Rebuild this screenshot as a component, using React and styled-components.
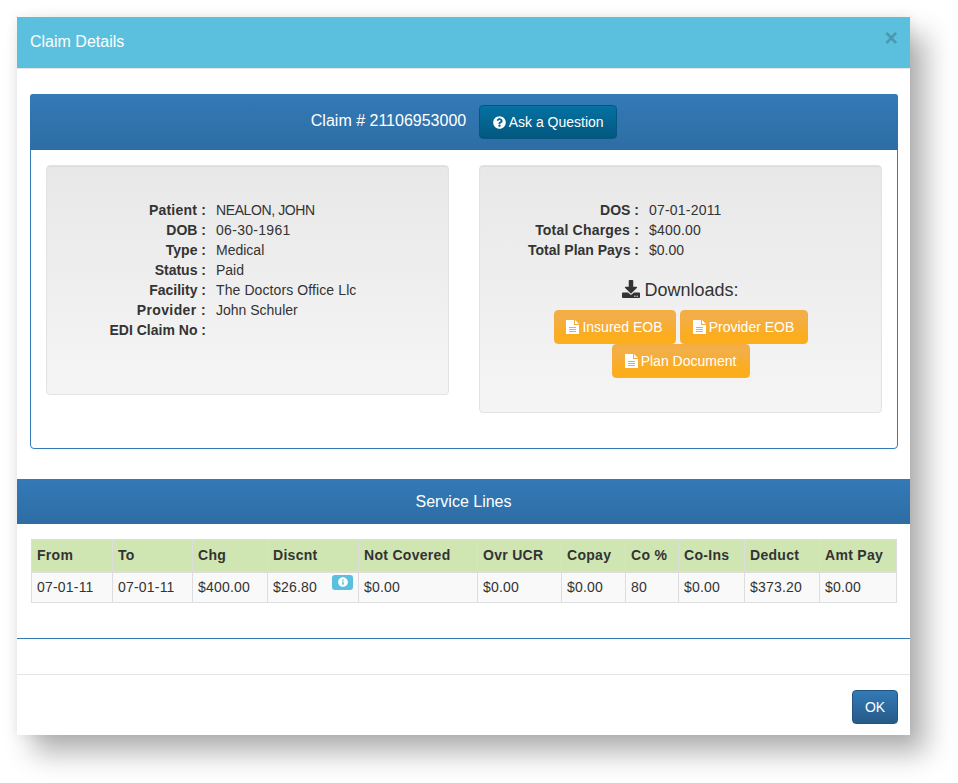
import React from "react";
import styled, { createGlobalStyle } from "styled-components";
import { FaQuestionCircle, FaDownload, FaInfoCircle } from "react-icons/fa";

const Global = createGlobalStyle`
  html, body { margin: 0; padding: 0; background: #fff; }
  body { font-family: "Liberation Sans", Arial, sans-serif; font-size: 14px; line-height: 20px; color: #333; }
  * { box-sizing: border-box; }
`;

const Page = styled.div`
  width: 958px;
  height: 783px;
  padding: 17px 48px 0 17px;
  overflow: hidden;
`;
const Modal = styled.div`
  width: 893px;
  height: 718px;
  background: #fff;
  display: flex;
  flex-direction: column;
  box-shadow: 16px 18px 26px rgba(0, 0, 0, 0.3), 0 0 12px rgba(0, 0, 0, 0.08);
`;
const ModalHeader = styled.div`
  height: 52px;
  flex: none;
  background: #5bc0de;
  border-bottom: 1px solid #e5e5e5;
  display: flex;
  align-items: flex-start;
  justify-content: space-between;
  padding: 15px 12px 0 13px;
`;
const Title = styled.div`
  color: #fff;
  font-size: 16px;
  line-height: 20px;
`;
const Close = styled.span`
  color: #000;
  opacity: 0.2;
  font-size: 23px;
  font-weight: 700;
  line-height: 14px;
  margin-top: -1px;
`;
const ClaimPanel = styled.section`
  margin: 25px 12px 30px 13px;
  height: 355px;
  border: 1px solid #337ab7;
  border-radius: 4px;
  flex: none;
`;
const BlueGradient = `
  background: linear-gradient(to bottom, #337ab7 0%, #2e6da4 100%);
  color: #fff;
  font-size: 16px;
`;
const PanelHeading = styled.div`
  ${BlueGradient}
  height: 56px;
  margin: -1px -1px 0;
  border-radius: 3px 3px 0 0;
  display: flex;
  align-items: flex-start;
  justify-content: center;
  gap: 13px;
`;
const ClaimNo = styled.span`
  line-height: 20px;
  margin-top: 17px;
`;
const AskButton = styled.button`
  width: 138px;
  height: 34px;
  margin-top: 11px;
  padding: 0;
  border: 1px solid #04587f;
  border-radius: 4px;
  background: linear-gradient(to bottom, #0472a3 0%, #03577f 100%);
  color: #fff;
  font: 14px/20px "Liberation Sans", Arial, sans-serif;
  display: flex;
  align-items: center;
  justify-content: center;
  gap: 3px;
  svg { width: 13px; height: 13px; }
`;
const PanelBody = styled.div`
  display: grid;
  grid-template-columns: 403px 403px;
  column-gap: 30px;
  align-items: start;
  padding: 15px;
`;
const Well = styled.div`
  height: ${(p) => p.$h}px;
  padding: 34px 19px 0 0;
  border: 1px solid #e3e3e3;
  border-radius: 4px;
  background: linear-gradient(to bottom, #e8e8e8 0%, #f5f5f5 100%);
  box-shadow: inset 0 1px 1px rgba(0, 0, 0, 0.05);
`;
const Row = styled.div`
  display: grid;
  grid-template-columns: 159px 1fr;
  column-gap: 10px;
  height: 20px;
`;
const Label = styled.b`
  text-align: right;
  white-space: nowrap;
  letter-spacing: ${(p) => p.$sp || 0}px;
`;
const Value = styled.span`
  white-space: nowrap;
  overflow: hidden;
  max-width: 140px;
  letter-spacing: ${(p) => p.$sp || 0}px;
`;
const Downloads = styled.div`
  padding-left: 19px;
  margin-top: 20px;
  text-align: center;
`;
const DownloadsTitle = styled.div`
  font-size: 18px;
  line-height: 20px;
  margin-bottom: 10px;
  svg { width: 18px; height: 18px; vertical-align: -2px; margin-right: 4px; }
`;
const ButtonWrap = styled.div`
  display: flex;
  flex-wrap: wrap;
  justify-content: center;
  column-gap: 4px;
  padding: 0 18px;
`;
const OrangeButton = styled.button`
  width: ${(p) => p.$w}px;
  height: 34px;
  padding: 0;
  border: 1px solid #f5ac3c;
  border-radius: 4px;
  background: linear-gradient(to bottom, #f3ae47 20%, #fbad1c 80%);
  color: #fff;
  font: 14px/20px "Liberation Sans", Arial, sans-serif;
  display: flex;
  align-items: center;
  justify-content: center;
  gap: 3px;
`;
const ServiceHeading = styled.div`
  ${BlueGradient}
  height: 45px;
  flex: none;
  display: flex;
  align-items: center;
  justify-content: center;
`;
const Table = styled.table`
  width: 865px;
  margin: 15px 0 35px 14px;
  border-collapse: collapse;
  table-layout: fixed;
  flex: none;
`;
const Col = styled.col`
  width: ${(p) => p.$w}px;
`;
const Th = styled.th`
  height: 32px;
  padding: 0 5px;
  background: #d0e6b2;
  border: 1px solid #ddd;
  border-bottom-width: 2px;
  text-align: left;
  font-weight: 700;
  white-space: nowrap;
  letter-spacing: 0.3px;
`;
const Td = styled.td`
  height: 31px;
  padding: 0 5px;
  background: #f9f9f9;
  border: 1px solid #ddd;
  white-space: nowrap;
  vertical-align: middle;
  letter-spacing: 0.2px;
`;
const DiscountCell = styled.div`
  display: flex;
  justify-content: space-between;
  align-items: center;
`;
const InfoBadge = styled.span`
  width: 21px;
  height: 15px;
  margin: -9px 0 0 0;
  border-radius: 3px;
  background: #5bc0de;
  color: #fff;
  display: flex;
  align-items: flex-start;
  justify-content: center;
  padding-top: 2px;
  svg { width: 10px; height: 10px; }
`;
const Rule = styled.div`
  height: 36px;
  flex: none;
  border-top: 1px solid #337ab7;
`;
const Footer = styled.div`
  flex: 1;
  border-top: 1px solid #e5e5e5;
  display: flex;
  justify-content: flex-end;
  align-items: flex-start;
  padding: 15px 12px 0 0;
`;
const OkButton = styled.button`
  width: 46px;
  height: 34px;
  padding: 0;
  border: 1px solid #245580;
  border-radius: 4px;
  background: linear-gradient(to bottom, #337ab7 0%, #265a88 100%);
  color: #fff;
  font: 14px/20px "Liberation Sans", Arial, sans-serif;
`;

const FileIcon = () => (
  <svg width="13" height="14" viewBox="0 0 13 14" aria-hidden="true">
    <path
      fill="#fff"
      fillRule="evenodd"
      d="M0 0h8v5h5v9H0zM3 7v1h7V7zM3 9v1h7V9zM3 11v1h7v-1z"
    />
    <path fill="#fff" d="M9 0l4 4H9z" />
  </svg>
);

const leftRows = [
  ["Patient :", "NEALON, JOHN", 0.2, -0.4],
  ["DOB :", "06-30-1961", 0, 0.3],
  ["Type :", "Medical", 0, 0],
  ["Status :", "Paid", 0, 0],
  ["Facility :", "The Doctors Office Llc", 0, 0.1],
  ["Provider :", "John Schuler", 0.4, 0],
  ["EDI Claim No :", "", 0, 0],
];
const rightRows = [
  ["DOS :", "07-01-2011", 0, 0.2],
  ["Total Charges :", "$400.00", 0.2, 0.2],
  ["Total Plan Pays :", "$0.00", 0, 0],
];
const columns = [
  ["From", 81, "07-01-11"],
  ["To", 80, "07-01-11"],
  ["Chg", 75, "$400.00"],
  ["Discnt", 91, "$26.80"],
  ["Not Covered", 119, "$0.00"],
  ["Ovr UCR", 84, "$0.00"],
  ["Copay", 64, "$0.00"],
  ["Co %", 53, "80"],
  ["Co-Ins", 66, "$0.00"],
  ["Deduct", 75, "$373.20"],
  ["Amt Pay", 77, "$0.00"],
];
const docs = [
  ["Insured EOB", 122],
  ["Provider EOB", 128],
  ["Plan Document", 138],
];

const InfoRows = ({ rows }) =>
  rows.map(([k, v, labelSp, valueSp]) => (
    <Row key={k}>
      <Label $sp={labelSp}>{k}</Label>
      <Value $sp={valueSp}>{v}</Value>
    </Row>
  ));

export default function App() {
  return (
    <Page>
      <Global />
      <Modal>
        <ModalHeader>
          <Title>Claim Details</Title>
          <Close>×</Close>
        </ModalHeader>
        <ClaimPanel>
          <PanelHeading>
            <ClaimNo>Claim # 21106953000</ClaimNo>
            <AskButton>
              <FaQuestionCircle /> Ask a Question
            </AskButton>
          </PanelHeading>
          <PanelBody>
            <Well $h={230}>
              <InfoRows rows={leftRows} />
            </Well>
            <Well $h={248}>
              <InfoRows rows={rightRows} />
              <Downloads>
                <DownloadsTitle>
                  <FaDownload />
                  Downloads:
                </DownloadsTitle>
                <ButtonWrap>
                  {docs.map(([t, w]) => (
                    <OrangeButton key={t} $w={w}>
                      <FileIcon /> {t}
                    </OrangeButton>
                  ))}
                </ButtonWrap>
              </Downloads>
            </Well>
          </PanelBody>
        </ClaimPanel>
        <ServiceHeading>Service Lines</ServiceHeading>
        <Table>
          <colgroup>
            {columns.map(([h, w]) => (
              <Col key={h} $w={w} />
            ))}
          </colgroup>
          <thead>
            <tr>
              {columns.map(([h]) => (
                <Th key={h}>{h}</Th>
              ))}
            </tr>
          </thead>
          <tbody>
            <tr>
              {columns.map(([h, , v]) => (
                <Td key={h}>
                  {h === "Discnt" ? (
                    <DiscountCell>
                      {v}
                      <InfoBadge>
                        <FaInfoCircle />
                      </InfoBadge>
                    </DiscountCell>
                  ) : (
                    v
                  )}
                </Td>
              ))}
            </tr>
          </tbody>
        </Table>
        <Rule />
        <Footer>
          <OkButton>OK</OkButton>
        </Footer>
      </Modal>
    </Page>
  );
}
